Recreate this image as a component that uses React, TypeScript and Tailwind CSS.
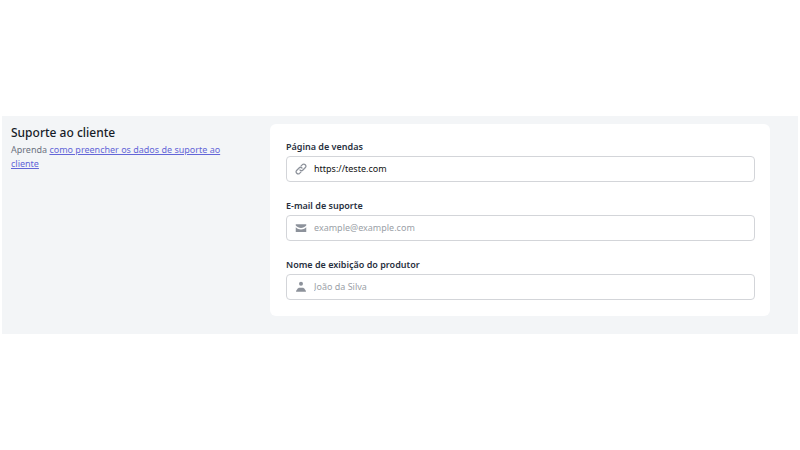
import type { ReactNode } from "react";

type FieldProps = {
  id: string;
  label: string;
  type: string;
  icon: ReactNode;
  placeholder?: string;
  defaultValue?: string;
};

const LinkIcon = () => (
  <svg viewBox="0 0 24 24" className="h-3 w-3" fill="none" stroke="currentColor" strokeWidth="2.5" strokeLinecap="round" strokeLinejoin="round">
    <path d="M14 10a4.200 4.200 0 0 0-5.900 0l-4.900 4.900a4.200 4.200 0 0 0 5.900 5.900l2.600-2.600" />
    <path d="M10 14a4.200 4.200 0 0 0 5.900 0l4.900-4.900a4.200 4.200 0 0 0-5.900-5.900l-2.600 2.600" />
  </svg>
);

const MailIcon = () => (
  <svg viewBox="0 0 24 24" className="h-3 w-3" fill="currentColor">
    <path d="M1.500 4.500h21v2.500c-3 3-6.500 5-10.500 5s-7.500-2-10.500-5z" />
    <path d="M1.500 10.500c3 2.800 6.500 4.500 10.500 4.500s7.500-1.700 10.500-4.500v9.500h-21z" />
  </svg>
);

const UserIcon = () => (
  <svg viewBox="0 0 24 24" className="h-3 w-3" fill="currentColor">
    <circle cx="12" cy="5.500" r="4" />
    <path d="M2 21.500c0-2 .8-3.500 2.500-5 1-2 2.500-3 4.500-3h6c2 0 3.500 1 4.500 3 1.700 1.500 2.500 3 2.500 5z" />
  </svg>
);

const Field = ({ id, label, type, icon, placeholder, defaultValue }: FieldProps) => {
  return (
    <div>
      <label htmlFor={id} className="block text-[9px] leading-[14px] font-semibold text-[#283040]">
        {label}
      </label>
      <div className="mt-0.5 flex h-[26px] items-center gap-[7px] rounded border border-[#d3d5d9] bg-white px-2 text-[#8d929b]">
        {icon}
        <input
          id={id}
          type={type}
          placeholder={placeholder}
          defaultValue={defaultValue}
          className="min-w-0 flex-1 bg-transparent text-[9px] leading-4 text-[#111111] outline-none placeholder:text-[#9b9fa7]"
        />
      </div>
    </div>
  );
};

const App = () => {
  return (
    <main className="flex min-h-screen items-center bg-white px-0.5 font-['Noto_Sans',sans-serif]">
      <section className="grid w-full grid-cols-3 gap-[18px] bg-[#f3f5f7] pt-2 pr-7 pb-[18px] pl-[9px]">
        {/* Section intro */}
        <div className="pr-4">
          <h2 className="text-xs leading-[18px] font-medium text-[#171c28]">Suporte ao cliente</h2>
          <p className="mt-px text-[9px] leading-[14px] text-[#6b7280]">
            Aprenda{" "}
            <a href="#" className="text-[#6366d8] underline">
              como preencher os dados de suporte ao cliente
            </a>
          </p>
        </div>

        {/* Form card */}
        <form className="col-span-2 space-y-[17px] rounded-md bg-white py-4 pr-[15px] pl-4">
          <Field id="sales-page" label="Página de vendas" type="url" icon={<LinkIcon />} defaultValue="https://teste.com" />
          <Field id="support-email" label="E-mail de suporte" type="email" icon={<MailIcon />} placeholder="example@example.com" />
          <Field id="producer-name" label="Nome de exibição do produtor" type="text" icon={<UserIcon />} placeholder="João da Silva" />
        </form>
      </section>
    </main>
  );
};

export default App;
